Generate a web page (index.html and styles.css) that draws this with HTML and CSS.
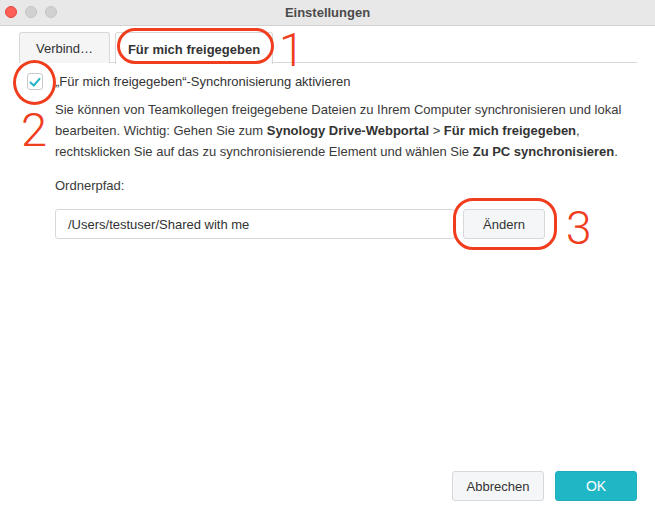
FILE: index.html
```html
<!DOCTYPE html>
<html lang="de">
<head>
<meta charset="utf-8">
<title>Einstellungen</title>
<link rel="stylesheet" href="styles.css">
</head>
<body>
<div class="window">
  <header class="titlebar">
    <div class="lights">
      <span class="light red"></span>
      <span class="light"></span>
      <span class="light"></span>
    </div>
    <div class="title">Einstellungen</div>
    <div></div>
  </header>

  <main class="content">
    <nav class="tabs">
      <div class="tab tab-short">Verbind…</div>
      <div class="tab tab-active">Für mich freigegeben
        <span class="mark mark-tab"></span>
        <span class="num num-1">1</span>
      </div>
    </nav>

    <label class="check-row">
      <span class="checkbox">
        <svg width="16" height="16" viewBox="0 0 16 16"><polyline points="3.5,8.5 6.8,11.5 12.5,4.8" fill="none" stroke="#1fb3c4" stroke-width="2" stroke-linecap="round" stroke-linejoin="round"/></svg>
        <span class="mark mark-check"></span>
        <span class="num num-2">2</span>
      </span>
      <span class="check-label">„Für mich freigegeben“-Synchronisierung aktivieren</span>
    </label>

    <div class="section">
      <p class="desc">Sie können von Teamkollegen freigegebene Dateien zu Ihrem Computer synchronisieren und lokal bearbeiten. Wichtig: Gehen Sie zum <b>Synology Drive-Webportal</b> &gt; <b>Für mich freigegeben</b>, rechtsklicken Sie auf das zu synchronisierende Element und wählen Sie <b>Zu PC synchronisieren</b>.</p>

      <div class="field-label">Ordnerpfad:</div>
      <div class="path-row">
        <div class="path-input">/Users/testuser/Shared with me</div>
        <div class="btn btn-change">Ändern
          <span class="mark mark-btn"></span>
          <span class="num num-3">3</span>
        </div>
      </div>
    </div>
  </main>

  <footer class="footer">
    <div class="btn btn-cancel">Abbrechen</div>
    <div class="btn btn-ok">OK</div>
  </footer>
</div>
</body>
</html>
```

FILE: styles.css
```css
* { box-sizing: border-box; }

html, body {
  margin: 0;
  padding: 0;
  background: #ffffff;
}

body {
  font-family: "Liberation Sans", Arial, sans-serif;
  font-size: 13px;
  color: #333333;
}

.window {
  display: flex;
  flex-direction: column;
  width: 655px;
  height: 519px;
  background: #ffffff;
}

.titlebar {
  height: 26px;
  flex: none;
  display: grid;
  grid-template-columns: 1fr auto 1fr;
  align-items: center;
  background: #e8e8e8;
  border-bottom: 1px solid #d2d2d2;
}

.lights {
  display: flex;
  gap: 8px;
  padding-left: 5px;
  padding-bottom: 1px;
}

.light {
  width: 12px;
  height: 12px;
  border-radius: 50%;
  background: #d1d1d1;
  border: 0.5px solid #c4c4c4;
}

.light.red {
  background: #fe5f57;
  border-color: #e2463f;
}

.title {
  font-weight: bold;
  color: #4b4b4b;
  font-size: 13px;
  padding-bottom: 1px;
}

.content {
  flex: 1;
  padding: 6px 18px 0 19px;
}

.tabs {
  display: flex;
  gap: 5px;
  height: 31px;
  border-bottom: 1px solid #d8d8d8;
}

.tab {
  position: relative;
  height: 31px;
  display: flex;
  align-items: center;
  justify-content: center;
  border: 1px solid #d8d8d8;
  border-bottom: none;
  border-radius: 3px 3px 0 0;
  background: #f5f5f5;
  color: #333333;
  padding-top: 1px;
}

.tab-short { width: 91px; }

.tab-active {
  width: 158px;
  background: #ffffff;
  font-weight: bold;
  height: 32px;
}

.mark {
  position: absolute;
  border: 3px solid #f03d1e;
  pointer-events: none;
}

.num {
  position: absolute;
  font-family: Roboto, "Liberation Sans", sans-serif;
  font-weight: 300;
  font-size: 46px;
  line-height: 1;
  color: #f03d1e;
}

.mark-tab {
  left: 1px;
  top: -5px;
  width: 157px;
  height: 36px;
  border-radius: 18px;
}

.num-1 {
  left: 163px;
  top: -6px;
}

.check-row {
  display: flex;
  align-items: center;
  gap: 12px;
  margin-top: 10px;
  padding-left: 8px;
}

.checkbox {
  position: relative;
  width: 16px;
  height: 17px;
  border: 1px solid #c9c9c9;
  border-radius: 3px;
  background: #ffffff;
  display: flex;
  align-items: center;
  justify-content: center;
}

.checkbox svg {
  flex: none;
}

.mark-check {
  left: -15px;
  top: -14px;
  width: 43px;
  height: 45px;
  border-radius: 50%;
}

.num-2 {
  left: -7px;
  top: 32px;
  font-size: 47px;
}

.check-label {
  color: #333333;
}

.section {
  padding-left: 36px;
}

.desc {
  margin: 9px 0 0 0;
  line-height: 21px;
  color: #3a3a3a;
}

.desc b {
  color: #333333;
}

.field-label {
  margin-top: 13px;
  line-height: 21px;
  color: #3a3a3a;
}

.path-row {
  display: flex;
  gap: 8px;
  margin-top: 13px;
}

.path-input {
  width: 400px;
  height: 30px;
  border: 1px solid #d8d8d8;
  border-radius: 3px;
  padding: 0 12px;
  display: flex;
  align-items: center;
  color: #333333;
}

.btn {
  position: relative;
  height: 30px;
  display: flex;
  align-items: center;
  justify-content: center;
  border: 1px solid #d6d8db;
  border-radius: 3px;
  background: #f5f6f7;
  color: #333333;
}

.btn-change { width: 82px; }

.mark-btn {
  left: -11px;
  top: -12px;
  width: 104px;
  height: 52px;
  border-radius: 20px;
}

.num-3 {
  left: 102px;
  top: -5px;
}

.footer {
  flex: none;
  display: flex;
  justify-content: flex-end;
  gap: 11px;
  padding: 0 18px 18px 0;
}

.btn-cancel { width: 92px; }

.btn-ok {
  width: 82px;
  background: #1fb6c6;
  border-color: #1cacbb;
  color: #ffffff;
  font-size: 14px;
}
```
